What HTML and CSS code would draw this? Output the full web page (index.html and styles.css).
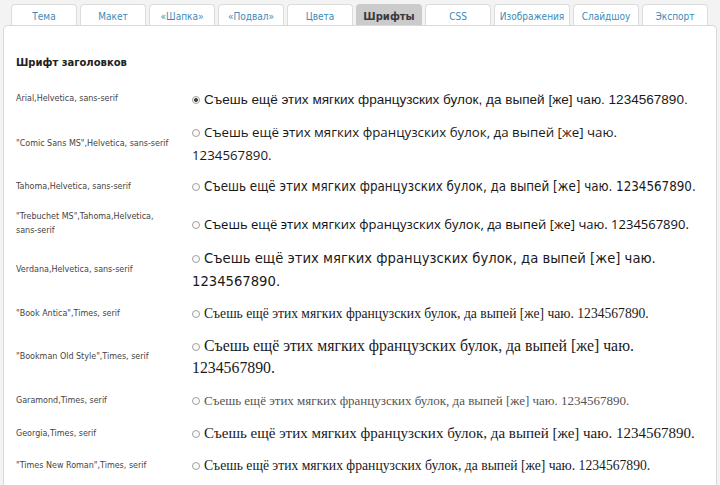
FILE: index.html
```html
<!DOCTYPE html>
<html lang="ru">
<head>
<meta charset="utf-8">
<title>Шрифты</title>
<link rel="stylesheet" href="styles.css">
</head>
<body>
<div class="tabs">
  <div class="tab">Тема</div>
  <div class="tab">Макет</div>
  <div class="tab">«Шапка»</div>
  <div class="tab">«Подвал»</div>
  <div class="tab">Цвета</div>
  <div class="tab tab-active">Шрифты</div>
  <div class="tab">CSS</div>
  <div class="tab tab-wide">Изображения</div>
  <div class="tab">Слайдшоу</div>
  <div class="tab">Экспорт</div>
</div>
<div class="panel">
  <h3 class="heading">Шрифт заголовков</h3>
  <div class="fonts">
    <div class="row row-arial">
      <div class="label">Arial,Helvetica, sans-serif</div>
      <div class="sample f-arial"><span class="radio radio-on"></span>Съешь ещё этих мягких французских булок, да выпей [же] чаю. 1234567890.</div>
    </div>
    <div class="row row-comic">
      <div class="label">"Comic Sans MS",Helvetica, sans-serif</div>
      <div class="sample f-comic"><span class="radio"></span>Съешь ещё этих мягких французских булок, да выпей [же] чаю.<br>1234567890.</div>
    </div>
    <div class="row row-tahoma">
      <div class="label">Tahoma,Helvetica, sans-serif</div>
      <div class="sample f-tahoma"><span class="radio"></span>Съешь ещё этих мягких французских булок, да выпей [же] чаю. 1234567890.</div>
    </div>
    <div class="row row-trebuchet">
      <div class="label">"Trebuchet MS",Tahoma,Helvetica,<br>sans-serif</div>
      <div class="sample f-trebuchet"><span class="radio"></span>Съешь ещё этих мягких французских булок, да выпей [же] чаю. 1234567890.</div>
    </div>
    <div class="row row-verdana">
      <div class="label">Verdana,Helvetica, sans-serif</div>
      <div class="sample f-verdana"><span class="radio"></span>Съешь ещё этих мягких французских булок, да выпей [же] чаю.<br>1234567890.</div>
    </div>
    <div class="row row-book">
      <div class="label">"Book Antica",Times, serif</div>
      <div class="sample f-book"><span class="radio"></span>Съешь ещё этих мягких французских булок, да выпей [же] чаю. 1234567890.</div>
    </div>
    <div class="row row-bookman">
      <div class="label">"Bookman Old Style",Times, serif</div>
      <div class="sample f-bookman"><span class="radio"></span>Съешь ещё этих мягких французских булок, да выпей [же] чаю.<br>1234567890.</div>
    </div>
    <div class="row row-garamond">
      <div class="label">Garamond,Times, serif</div>
      <div class="sample f-garamond"><span class="radio"></span>Съешь ещё этих мягких французских булок, да выпей [же] чаю. 1234567890.</div>
    </div>
    <div class="row row-georgia">
      <div class="label">Georgia,Times, serif</div>
      <div class="sample f-georgia"><span class="radio"></span>Съешь ещё этих мягких французских булок, да выпей [же] чаю. 1234567890.</div>
    </div>
    <div class="row row-times">
      <div class="label">"Times New Roman",Times, serif</div>
      <div class="sample f-times"><span class="radio"></span>Съешь ещё этих мягких французских булок, да выпей [же] чаю. 1234567890.</div>
    </div>
  </div>
</div>
</body>
</html>
```
FILE: styles.css
```css
html, body {
  margin: 0;
  padding: 0;
}
body {
  background: #f3f3f3;
  font-family: "DejaVu Sans", Verdana, sans-serif;
  color: #333;
  overflow: hidden;
  height: 485px;
}
.tabs {
  display: flex;
  align-items: flex-end;
  gap: 3px;
  padding: 4px 0 0 11px;
  height: 21px;
}
.tab {
  box-sizing: border-box;
  width: 66px;
  height: 21px;
  border: 1px solid #dcdcdc;
  border-bottom: none;
  border-radius: 4px 4px 0 0;
  background: #fff;
  color: #3d8ab8;
  font-family: "DejaVu Sans Condensed", "DejaVu Sans", sans-serif;
  font-size: 10px;
  display: flex;
  align-items: center;
  justify-content: center;
  padding-top: 3px;
}
.tab-wide {
  width: 76px;
}
.tab-active {
  background: #cbcbcb;
  border-color: #cbcbcb;
  color: #3a3a3a;
  font-family: "DejaVu Sans", sans-serif;
  font-weight: bold;
}
.panel {
  box-sizing: border-box;
  margin: 0 3px;
  background: #fff;
  border: 1px solid #d9d9d9;
  border-bottom: none;
  border-radius: 5px 5px 0 0;
  padding: 30px 10px 0 12px;
  height: 460px;
  overflow: hidden;
}
.heading {
  margin: 0;
  font-size: 10px;
  font-weight: bold;
  color: #222;
  line-height: 14px;
}
.fonts {
  display: flex;
  flex-direction: column;
  margin-top: 7px;
}
.row {
  box-sizing: border-box;
  display: grid;
  grid-template-columns: 176px 1fr;
  align-items: center;
  flex-shrink: 0;
}
.label {
  font-size: 8px;
  line-height: 14px;
  color: #444;
  white-space: nowrap;
}
.sample {
  color: #1a1a1a;
  white-space: nowrap;
}
.radio {
  display: inline-block;
  box-sizing: border-box;
  width: 8px;
  height: 8px;
  border: 1px solid #a0a0a0;
  border-radius: 50%;
  margin-right: 4px;
  vertical-align: 0;
  background: #fafafa;
}
.radio-on {
  background: radial-gradient(circle, #444 0 1.6px, #fafafa 2.2px);
}
.row-arial { height: 44px; }
.row-comic { height: 46px; }
.row-tahoma { height: 39px; }
.row-trebuchet { height: 41px; padding-bottom: 6px; }
.row-verdana { height: 45px; }
.row-book { height: 43px; }
.row-bookman { height: 44px; padding-bottom: 2px; }
.row-garamond { height: 41px; padding-top: 2px; }
.row-georgia { height: 31px; padding-bottom: 4px; }
.row-times { height: 30px; }

.f-arial {
  font-family: "Liberation Sans", Arial, sans-serif;
  font-size: 13.55px;
}
.f-comic {
  font-family: "Comic Sans MS", "Open Sans", sans-serif;
  font-size: 13.3px;
  line-height: 23px;
}
.f-tahoma {
  font-family: "DejaVu Sans Condensed", Tahoma, sans-serif;
  font-size: 13.25px;
}
.f-trebuchet {
  font-family: "Open Sans", "Trebuchet MS", sans-serif;
  font-size: 13px;
  color: #111;
}
.f-verdana {
  font-family: "DejaVu Sans", Verdana, sans-serif;
  font-size: 13.2px;
  line-height: 23px;
}
.f-book {
  font-family: "Liberation Serif", "Times New Roman", serif;
  font-size: 13.6px;
}
.f-bookman {
  font-family: "Liberation Serif", "Times New Roman", serif;
  font-size: 15.8px;
  line-height: 22px;
}
.f-garamond {
  font-family: "Liberation Serif", "Times New Roman", serif;
  font-size: 13px;
  color: #555;
}
.f-georgia {
  font-family: "Liberation Serif", Georgia, serif;
  font-size: 15px;
}
.f-times {
  font-family: "Liberation Serif", "Times New Roman", serif;
  font-size: 13.65px;
}
```
